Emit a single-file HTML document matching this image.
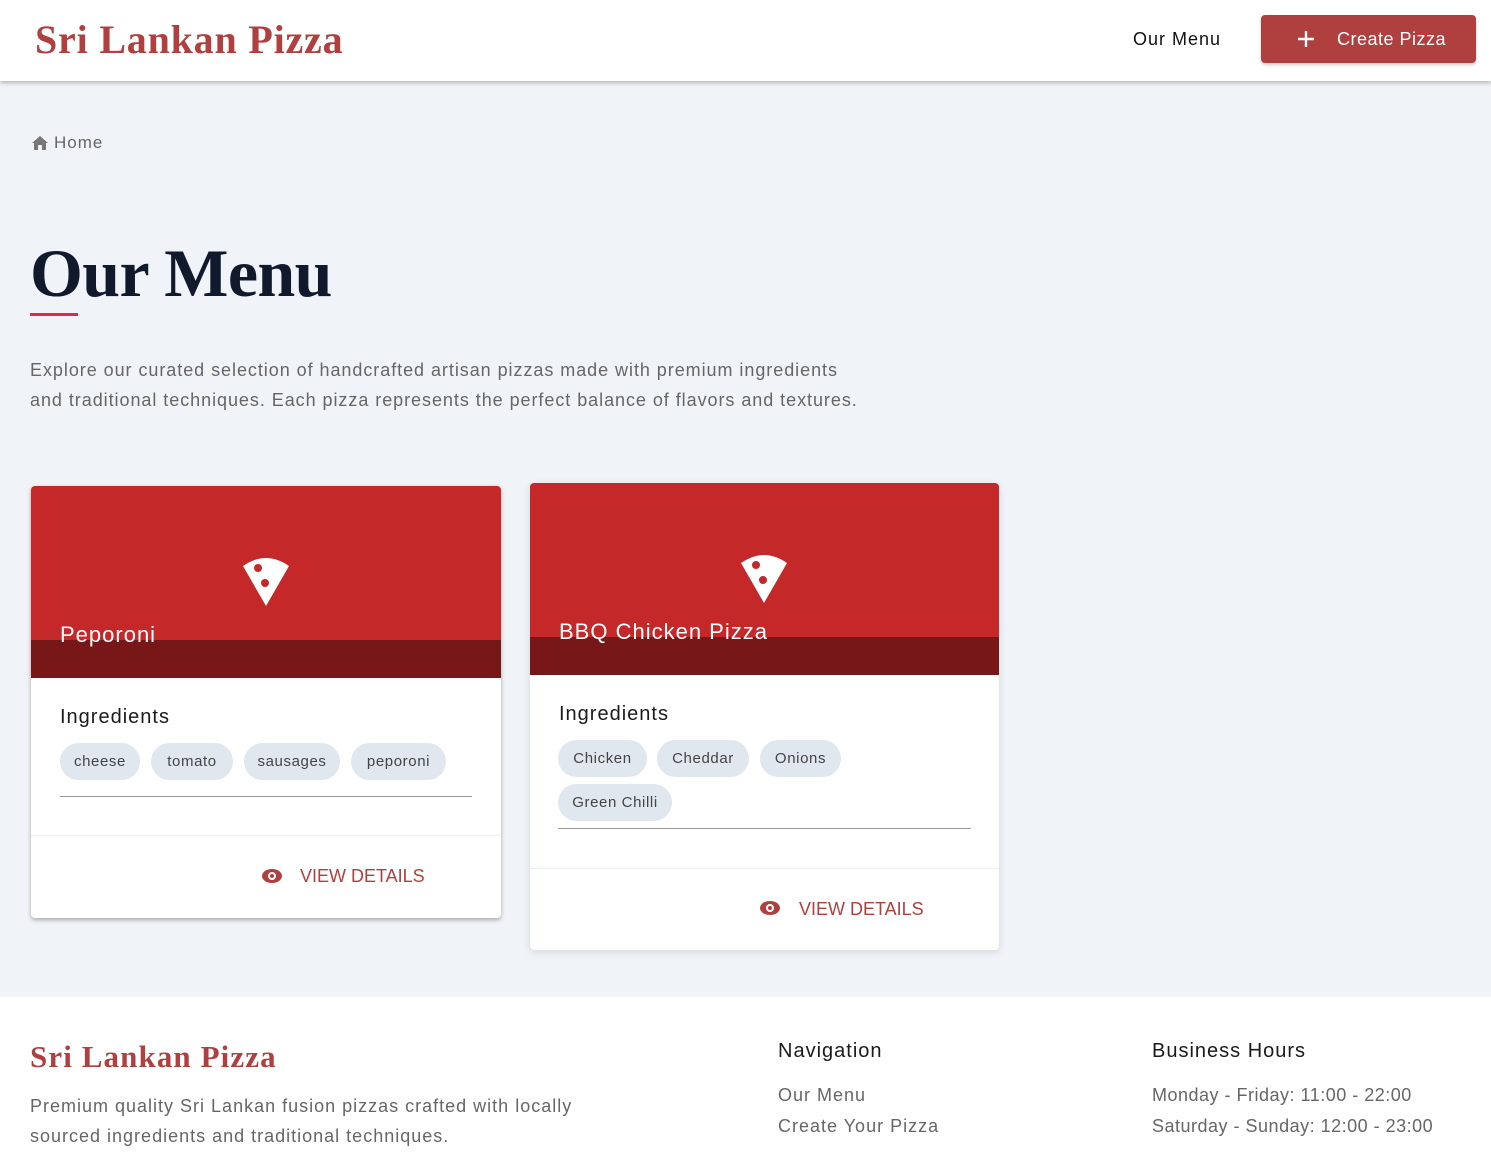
<!DOCTYPE html><html><head><style>
*{box-sizing:border-box;margin:0;padding:0}
body{width:1491px;height:1165px;overflow:hidden;background:#f0f3f7;font-family:"Liberation Sans",sans-serif;position:relative;letter-spacing:1px}
.hdr{position:absolute;top:0;left:0;width:1491px;height:81px;background:#fff;box-shadow:0 2px 4px rgba(0,0,0,.25)}
.logo{position:absolute;left:35px;top:16px;font-family:"Liberation Serif",serif;font-weight:bold;font-size:40px;color:#b0403f;letter-spacing:0.8px}
.nav{position:absolute;left:1133px;top:29px;font-size:18px;color:#111}
.btn{position:absolute;left:1261px;top:15px;width:215px;height:48px;background:#b0403f;border-radius:4px;color:#fff;font-size:18px;box-shadow:0 2px 3px rgba(0,0,0,.2);letter-spacing:0.5px}
.btn span{position:absolute;left:76px;top:14px}
.a{position:absolute}
.card{position:absolute;background:#fff;border-radius:4px;overflow:hidden}
.top{position:absolute;left:0;top:0;width:100%;height:192px;background:#c42828}
.band{position:absolute;left:0;top:154px;width:100%;height:38px;background:#771718}
.title{position:absolute;left:29px;top:136px;color:#fff;font-size:22px}
.ing{position:absolute;left:29px;font-size:20px;color:#1a1a1a}
.chip{position:absolute;height:37px;border-radius:19px;background:#e1e7ef;color:#444;font-size:15px;line-height:37px;text-align:center;letter-spacing:0.6px}
.line{position:absolute;left:29px;height:1px;background:#999}
.vd{position:absolute;color:#b0403f;font-size:18px}
</style></head><body>
<div class="hdr"><div class="logo">Sri Lankan Pizza</div><div class="nav">Our Menu</div>
<div class="btn"><svg style="position:absolute;left:35px;top:14px" width="20" height="20"><path d="M10 2v16M2 10h16" stroke="#fff" stroke-width="2.4"/></svg><span>Create Pizza</span></div></div>
<svg class="a" style="left:32px;top:136px" width="16" height="14"><path d="M8 0L0 7h2v7h4v-5h4v5h4V7h2z" fill="#777"/></svg>
<div class="a" style="left:54px;top:133px;font-size:17px;color:#666">Home</div>
<div class="a" style="left:30px;top:234px;font-family:'Liberation Serif',serif;font-weight:bold;font-size:68px;color:#111a2c;letter-spacing:-0.6px">Our Menu</div>
<div class="a" style="left:30px;top:313px;width:48px;height:3px;background:#e0264a"></div>
<div class="a" style="left:30px;top:355px;font-size:18px;line-height:30px;color:#666;width:900px;letter-spacing:0.95px">Explore our curated selection of handcrafted artisan pizzas made with premium ingredients<br>and traditional techniques. Each pizza represents the perfect balance of flavors and textures.</div>

<div class="card" style="left:31px;top:486px;width:470px;height:432px;box-shadow:0 2px 4px rgba(0,0,0,.3)">
<div class="top"></div><div class="band"></div>
<svg class="a" style="left:212px;top:70px" width="46" height="52"><path d="M0 10Q23-6 46 10L23 50Z" fill="#fff"/><circle cx="15" cy="12" r="4" fill="#c42828"/><circle cx="22" cy="27" r="4" fill="#c42828"/></svg>
<div class="title">Peporoni</div>
<div class="ing" style="top:220px">Ingredients</div>
<div class="chip" style="left:29px;top:257px;width:80px">cheese</div>
<div class="chip" style="left:120px;top:257px;width:82px">tomato</div>
<div class="chip" style="left:213px;top:257px;width:96px">sausages</div>
<div class="chip" style="left:320px;top:257px;width:95px">peporoni</div>
<div class="line" style="top:310px;width:412px"></div>
<div class="a" style="left:0;top:349px;width:100%;height:1px;background:#eee"></div>
<svg class="a" style="left:230px;top:382px" width="22" height="16"><ellipse cx="11" cy="8" rx="10" ry="7" fill="#b0403f"/><circle cx="11" cy="8" r="4" fill="#fff"/><circle cx="11" cy="8" r="2" fill="#b0403f"/></svg>
<div class="vd" style="left:269px;top:380px;letter-spacing:0">VIEW DETAILS</div>
</div>

<div class="card" style="left:530px;top:483px;width:469px;height:467px;box-shadow:0 2px 8px rgba(0,0,0,.12)">
<div class="top"></div><div class="band"></div>
<svg class="a" style="left:211px;top:70px" width="46" height="52"><path d="M0 10Q23-6 46 10L23 50Z" fill="#fff"/><circle cx="15" cy="12" r="4" fill="#c42828"/><circle cx="22" cy="27" r="4" fill="#c42828"/></svg>
<div class="title">BBQ Chicken Pizza</div>
<div class="ing" style="top:220px">Ingredients</div>
<div class="chip" style="left:28px;top:257px;width:89px">Chicken</div>
<div class="chip" style="left:127px;top:257px;width:92px">Cheddar</div>
<div class="chip" style="left:230px;top:257px;width:81px">Onions</div>
<div class="chip" style="left:28px;top:301px;width:114px">Green Chilli</div>
<div class="line" style="top:345px;left:28px;width:413px"></div>
<div class="a" style="left:0;top:385px;width:100%;height:1px;background:#eee"></div>
<svg class="a" style="left:229px;top:417px" width="22" height="16"><ellipse cx="11" cy="8" rx="10" ry="7" fill="#b0403f"/><circle cx="11" cy="8" r="4" fill="#fff"/><circle cx="11" cy="8" r="2" fill="#b0403f"/></svg>
<div class="vd" style="left:269px;top:416px;letter-spacing:0">VIEW DETAILS</div>
</div>

<div class="a" style="left:0;top:997px;width:1491px;height:168px;background:#fff"></div>
<div class="a" style="left:30px;top:1039px;font-family:'Liberation Serif',serif;font-weight:bold;font-size:31px;color:#b0403f;letter-spacing:1.1px">Sri Lankan Pizza</div>
<div class="a" style="left:30px;top:1091px;font-size:18px;line-height:30px;color:#666">Premium quality Sri Lankan fusion pizzas crafted with locally<br>sourced ingredients and traditional techniques.</div>
<div class="a" style="left:778px;top:1040px;font-size:20px;color:#1a1a1a">Navigation</div>
<div class="a" style="left:778px;top:1080px;font-size:18px;line-height:31px;color:#666">Our Menu<br>Create Your Pizza</div>
<div class="a" style="left:1152px;top:1040px;font-size:20px;color:#1a1a1a">Business Hours</div>
<div class="a" style="left:1152px;top:1080px;font-size:18px;line-height:31px;color:#666;letter-spacing:0.5px">Monday - Friday: 11:00 - 22:00<br>Saturday - Sunday: 12:00 - 23:00</div>
</body></html>
